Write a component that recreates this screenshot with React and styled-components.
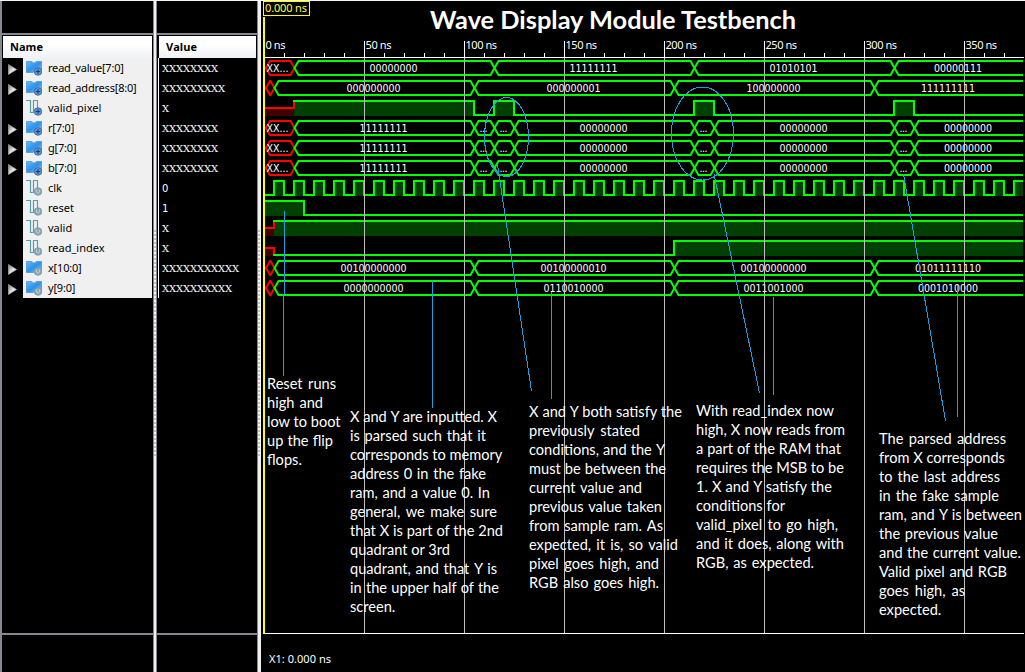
import React from "react";
import styled, { createGlobalStyle } from "styled-components";

const GREEN = "#00ff00";
const RED = "#ff0000";
const BLUE = "#1aa0e4";

const GlobalStyle = createGlobalStyle`
  body {
    margin: 0;
    background: #000;
    overflow: hidden;
  }
`;

const Window = styled.main`
  display: flex;
  box-sizing: border-box;
  width: 1025px;
  height: 672px;
  background: #000;
  border-top: 1px solid #f4f4f4;
  color: #fff;
  font-family: "Noto Sans", sans-serif;
  font-size: 11px;
`;

const Pane = styled.section`
  display: flex;
  flex-direction: column;
  box-sizing: border-box;
  flex: none;
  width: ${(p) => p.$width}px;
  border-left: ${(p) => p.$edge}px solid #85888f;
  border-right: 1px solid #85888f;
`;

const PaneTop = styled.div`
  flex: none;
  height: 32px;
  border-bottom: 2px solid #85888f;
`;

const PaneBody = styled.div`
  flex: 1;
  padding: 1px 1px 0 ${(p) => p.$left}px;
`;

const PaneFoot = styled.div`
  flex: none;
  height: 37px;
  border-top: 2px solid #85888f;
`;

const Header = styled.div`
  height: 22px;
  padding-left: ${(p) => p.$indent}px;
  margin-left: ${(p) => p.$offset || 0}px;
  background: linear-gradient(#fff 40%, #eff1f4);
  color: #000;
  font: bold 11px/22px "Open Sans", sans-serif;
`;

const Splitter = styled.div`
  flex: none;
  width: ${(p) => p.$width}px;
  background: #f0f0f0;
  display: flex;
  align-items: flex-start;
  padding-top: 229px;
  box-sizing: border-box;
`;

const Grip = styled.div`
  width: 2px;
  height: 228px;
  background: repeating-linear-gradient(#c3c3c3 0 2px, #f8f8f8 2px 4px);
`;

const SignalRow = styled.div`
  display: flex;
  height: 20px;
`;

const Expander = styled.div`
  flex: none;
  width: 20px;
  height: 20px;
`;

const SignalName = styled.div`
  flex: 1;
  display: flex;
  gap: 6px;
  padding-left: 3px;
  background: #f0f0f0;
  color: #000;
  white-space: nowrap;
  line-height: 20px;
  letter-spacing: ${(p) => (p.$bus ? -0.2 : 0)}px;
`;

const ValueList = styled.div`
  border-left: 1px solid #fff;
  padding-left: 3px;
`;

const Value = styled.div`
  height: 20px;
  font: 10px/22px ${(p) => (p.$digit ? '"DejaVu Sans", sans-serif' : '"DejaVu Serif", serif')};
  letter-spacing: -0.12px;
`;

const WavePane = styled.section`
  position: relative;
  flex: none;
  width: 764px;
  margin-top: -1px;
`;

const Chart = styled.svg`
  display: block;
`;

const ChartText = styled.text`
  fill: ${(p) => p.$color || "#fff"};
  font-family: ${(p) => p.$family || '"Noto Sans", sans-serif'};
  font-size: ${(p) => p.$size || 11}px;
  font-weight: ${(p) => p.$weight || 400};
`;

const Note = styled.div`
  position: absolute;
  left: ${(p) => p.$x - 261}px;
  top: ${(p) => p.$y - 1}px;
  font: 14.6px/19px Lato, sans-serif;
`;

const NoteLine = styled.div`
  width: ${(p) => p.$width}px;
  height: 19px;
  display: flex;
  justify-content: space-between;
  white-space: pre;
`;

const signals = [
  { name: "read_value[7:0]", value: "XXXXXXXX", bus: true },
  { name: "read_address[8:0]", value: "XXXXXXXXX", bus: true },
  { name: "valid_pixel", value: "X" },
  { name: "r[7:0]", value: "XXXXXXXX", bus: true },
  { name: "g[7:0]", value: "XXXXXXXX", bus: true },
  { name: "b[7:0]", value: "XXXXXXXX", bus: true },
  { name: "clk", value: "0", input: true },
  { name: "reset", value: "1", input: true },
  { name: "valid", value: "X", input: true },
  { name: "read_index", value: "X", input: true },
  { name: "x[10:0]", value: "XXXXXXXXXXX", bus: true, input: true },
  { name: "y[9:0]", value: "XXXXXXXXXX", bus: true, input: true },
];

const END = 379.5;
const rgb = [
  [0, 15, "XX..."], [15, 105, "11111111"], [105, 115, "..."], [115, 125, "..."],
  [125, 215, "00000000"], [215, 225, "..."], [225, 315, "00000000"],
  [315, 325, "..."], [325, END, "00000000"],
];
const buses = [
  [0, [[0, 15, "XX..."], [15, 115, "00000000"], [115, 215, "11111111"], [215, 315, "01010101"], [315, END, "00000111"]]],
  [1, [[0, 5, ""], [5, 105, "000000000"], [105, 205, "000000001"], [205, 305, "100000000"], [305, END, "111111111"]]],
  [3, rgb], [4, rgb], [5, rgb],
  [10, [[0, 5, ""], [5, 105, "00100000000"], [105, 205, "00100000010"], [205, 305, "00100000000"], [305, END, "01011111110"]]],
  [11, [[0, 5, ""], [5, 105, "0000000000"], [105, 205, "0110010000"], [205, 305, "0011001000"], [305, END, "0001010000"]]],
];

const clock = Array.from({ length: 76 }, (_, k) => [k * 5, Math.min(k * 5 + 5, END), k % 2]);
const bits = [
  [2, [[0, 15, "x"], [15, 105, 1], [105, 115, 0], [115, 125, 1], [125, 215, 0], [215, 225, 1], [225, 315, 0], [315, 325, 1], [325, END, 0]]],
  [6, clock],
  [7, [[0, 20, 1], [20, END, 0]]],
  [8, [[0, 5, "x"], [5, END, 1]]],
  [9, [[0, 5, "x"], [5, 205, 0], [205, END, 1]]],
];

const notes = [
  { x: 267, y: 375, lines: [["Reset runs", 69], ["high and", 56], ["low to boot", 73], ["up the flip", 66], ["flops.", 36]] },
  { x: 350, y: 408, lines: [["X and Y are inputted. X", 147], ["is parsed such that it", 136], ["corresponds to memory", 152], ["address 0 in the fake", 136], ["ram, and a value 0. In", 140], ["general, we make sure", 147], ["that X is part of the 2nd", 153], ["quadrant or 3rd", 100], ["quadrant, and that Y is", 147], ["in the upper half of the", 149], ["screen.", 47]] },
  { x: 529, y: 403, lines: [["X and Y both satisfy the", 153], ["previously stated", 111], ["conditions, and the Y", 136], ["must be between the", 137], ["current value and", 113], ["previous value taken", 133], ["from sample ram. As", 134], ["expected, it is, so valid", 149], ["pixel goes high, and", 130], ["RGB also goes high.", 130]] },
  { x: 696, y: 402, lines: [["With read_index now", 138], ["high, X now reads from", 149], ["a part of the RAM that", 145], ["requires the MSB to be", 148], ["1. X and Y satisfy the", 136], ["conditions for", 89], ["valid_pixel to go high,", 142], ["and it does, along with", 148], ["RGB, as expected.", 118]] },
  { x: 879, y: 430, lines: [["The parsed address", 127], ["from X corresponds", 125], ["to the last address", 121], ["in the fake sample", 120], ["ram, and Y is between", 143], ["the previous value", 119], ["and the current value.", 142], ["Valid pixel and RGB", 128], ["goes high, as", 86], ["expected.", 62]] },
];

const xAt = (t) => 264 + 2 * t;

function Triangle() {
  return (
    <svg width="20" height="20">
      <defs>
        <linearGradient id="tri" x1="0" y1="0" x2="1" y2="1">
          <stop offset="0" stopColor="#777" />
          <stop offset="0.5" stopColor="#ddd" />
          <stop offset="1" stopColor="#fff" />
        </linearGradient>
      </defs>
      <path d="M5.5 6.5V16.5L13.5 11.5Z" fill="url(#tri)" stroke="#bbb" strokeWidth="0.6" />
    </svg>
  );
}

function SignalIcon({ bus, input }) {
  return (
    <svg width="16" height="20" viewBox="0 0 16 20">
      <defs>
        <linearGradient id="busFill" x1="0" y1="0" x2="1" y2="1">
          <stop offset="0" stopColor="#6bb9f5" />
          <stop offset="0.5" stopColor="#2e93e6" />
          <stop offset="1" stopColor="#8ac4f0" />
        </linearGradient>
      </defs>
      {bus ? (
        <path d="M0.3 3.5H5.5Q8 6.5 10.5 3.5H15.7V14H11Q8.5 13 7 14.5H0.3Z" fill="url(#busFill)" stroke="#2c86d0" strokeWidth="0.6" />
      ) : (
        <path d="M0 2.5H4.5V14.5H7.5V2.5H11.5V10" fill="none" stroke="#5b9ea8" strokeWidth="1.2" />
      )}
      <circle cx="12" cy="13.5" r="3.8" fill={input ? "#8ea6b5" : "#5b94cf"} stroke={input ? "#5d9bd2" : "#2d62a4"} strokeWidth="0.8" />
      {input ? (
        <path d="M10.4 11.5V14Q12 16.5 13.6 14V11.5" fill="none" stroke="#d8d0a0" strokeWidth="1" />
      ) : (
        <path d="M12 11.3V15.7M9.8 13.5H14.2" stroke="#173d70" strokeWidth="1" />
      )}
    </svg>
  );
}

function BusTrace({ row, segments }) {
  const top = 61 + row * 20;
  const bottom = top + 14;
  return segments.map(([from, to, label]) => {
    const a = from === 0 ? 266 : xAt(from) + 0.5;
    const b = to === END ? xAt(to) : xAt(to) + 0.5;
    const open = to === END;
    const edge = (y, s) =>
      `M${a} ${top + 7}l2.3 ${4 * s}l1.7 ${3 * s}H${open ? b : b - 4}` + (open ? "" : `l1.7 ${-3 * s}l2.3 ${-4 * s}`);
    const mid = (xAt(from) + xAt(to)) / 2;
    const dots = label === "...";
    const unknown = label === "XX...";
    const width = dots ? 8 : unknown ? 22 : label.length * 6;
    return (
      <g key={from}>
        <path d={edge(top, -1) + edge(bottom, 1)} fill="none" stroke={from === 0 ? RED : GREEN} strokeWidth="2" strokeLinecap={open ? "butt" : "square"} />
        {label && (
          <ChartText
            x={(unknown ? 267 : mid - width / 2) - 0.5}
            y={top + 11}
            textLength={width}
            $size={10.5}
            $family={'"DejaVu Sans Condensed", "DejaVu Sans", sans-serif'}
          >
            {label}
          </ChartText>
        )}
      </g>
    );
  });
}

function BitTrace({ row, segments }) {
  const base = 58 + row * 20;
  const level = (v) => base + (v === "x" ? 10 : v ? 3 : 17);
  return (
    <g shapeRendering="crispEdges">
      {segments.map(([from, to, v]) =>
        v ? (
          <rect key={from} x={xAt(from)} y={level(v)} width={xAt(to) - xAt(from)} height={base + 18 - level(v)} fill={v === "x" ? "#400000" : "#004000"} />
        ) : null
      )}
      {segments.map(([from, to, v], i) => {
        const next = segments[i + 1];
        const down = next && level(next[2]) > level(v);
        return (
          <path
            key={from}
            d={`M${xAt(from) - (i ? 1 : 0)} ${level(v)}H${xAt(to)}` + (next ? `V${level(next[2]) + (down ? 1 : -1)}` : "")}
            fill="none"
            stroke={v === "x" ? RED : GREEN}
            strokeWidth="2"
          />
        );
      })}
    </g>
  );
}

function Ruler() {
  const majors = [0, 50, 100, 150, 200, 250, 300, 350];
  return (
    <g>
      <rect x="265" y="57" width="759" height="1" fill="#fff" />
      {Array.from({ length: 38 }, (_, i) => i * 10)
        .filter((t) => t > 0)
        .map((t) => (
          <rect key={t} x={xAt(t)} y={t % 50 ? 53 : 41} width="1" height={t % 50 ? 4 : 16} fill="#fff" />
        ))}
      {majors.map((t) => (
        <ChartText key={t} x={xAt(t) + 1.5} y="49" textLength={t === 0 ? 20 : t < 100 ? 26 : 31.5}>
          {`${t} ns`}
        </ChartText>
      ))}
    </g>
  );
}

function Callouts() {
  return (
    <g fill="none" stroke={BLUE} strokeWidth="1" shapeRendering="crispEdges">
      <ellipse cx="506.5" cy="137" rx="22" ry="39.5" />
      <ellipse cx="702.5" cy="133.5" rx="31" ry="46.5" />
      <path d="M284.5 211V295M283.5 295V376M432.5 281V408M497.5 165L531.5 391M714 174L759.5 393M903.5 174L945.5 421" />
      <path d="M551.5 292V399M773.5 297V395M957.5 285V417" />
    </g>
  );
}

function WaveChart() {
  return (
    <Chart width="764" height="672" viewBox="261 0 764 672">
      {bits.map(([row, segments]) => <BitTrace key={row} row={row} segments={segments} />)}
      <g fill="#c0c0c0">
        {[50, 100, 150, 200, 250, 300, 350].map((t) => <rect key={t} x={xAt(t)} y="58" width="1" height="575" />)}
      </g>
      {buses.map(([row, segments]) => <BusTrace key={row} row={row} segments={segments} />)}
      <g fill="#c0c0c0" opacity="0.55">
        {[50, 100, 150, 200, 250, 300, 350].map((t) => <rect key={t} x={xAt(t)} y="58" width="1" height="240" />)}
      </g>
      <Ruler />
      <rect x="263" y="633" width="761" height="1" fill="#fff" />
      <rect x="263" y="17" width="2" height="617" fill="#ffff00" />
      <rect x="263.5" y="1.5" width="46" height="14" fill="#000" stroke="#ffff00" />
      <ChartText x="265" y="12" textLength="42" $color="#ffff40">0.000 ns</ChartText>
      <ChartText x="430" y="29" textLength="366" lengthAdjust="spacingAndGlyphs" $size={24} $weight={700} $family="Lato, sans-serif">
        Wave Display Module Testbench
      </ChartText>
      <Callouts />
      <ChartText x="269" y="663" textLength="62">X1: 0.000 ns</ChartText>
    </Chart>
  );
}

export default function App() {
  return (
    <Window>
      <GlobalStyle />
      <Pane $width={154} $edge={2}>
        <PaneTop />
        <PaneBody $left={1}>
          <Header $indent={7}>Name</Header>
          {signals.map((s) => (
            <SignalRow key={s.name}>
              <Expander>{s.bus && <Triangle />}</Expander>
              <SignalName $bus={s.bus}>
                <SignalIcon bus={s.bus} input={s.input} />
                {s.name}
              </SignalName>
            </SignalRow>
          ))}
        </PaneBody>
        <PaneFoot />
      </Pane>
      <Splitter $width={2}><Grip /></Splitter>
      <Pane $width={102} $edge={1}>
        <PaneTop />
        <PaneBody $left={1}>
          <Header $indent={7} $offset={1}>Value</Header>
          <ValueList>
            {signals.map((s) => (
              <Value key={s.name} $digit={s.value !== "X" && s.value.length === 1}>{s.value}</Value>
            ))}
          </ValueList>
        </PaneBody>
        <PaneFoot />
      </Pane>
      <Splitter $width={3}><Grip /></Splitter>
      <WavePane>
        <WaveChart />
        {notes.map((n) => (
          <Note key={n.x} $x={n.x} $y={n.y}>
            {n.lines.map(([text, width]) => (
              <NoteLine key={text} $width={width}>
                {text.split(" ").map((word, i, all) => (
                  <span key={i}>{i < all.length - 1 ? word + " " : word}</span>
                ))}
              </NoteLine>
            ))}
          </Note>
        ))}
      </WavePane>
    </Window>
  );
}
